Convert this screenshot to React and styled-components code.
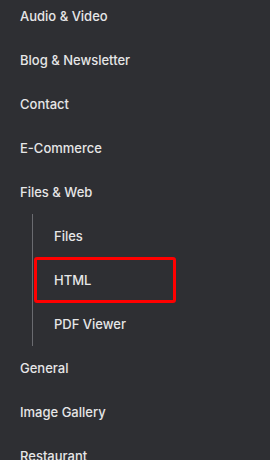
import React from "react";
import styled, { createGlobalStyle } from "styled-components";

const GlobalStyle = createGlobalStyle`
  html, body {
    margin: 0;
    padding: 0;
    background-color: #2e2f33;
  }
  body {
    width: 270px;
    height: 460px;
    overflow: hidden;
    font-family: Inter, "Noto Sans", sans-serif;
  }
`;

const Sidebar = styled.nav`
  width: 270px;
  height: 460px;
  background-color: #2e2f33;
  overflow: hidden;
`;

const Menu = styled.ul`
  list-style: none;
  margin: -6px 0 0 0;
  padding: 0;
`;

const Item = styled.li`
  display: flex;
  flex-direction: column;
`;

const Link = styled.a`
  display: flex;
  align-items: center;
  height: 44px;
  padding-left: 20px;
  color: #e6e6e7;
  font-size: 13px;
  font-weight: 500;
  text-decoration: none;
`;

const SubMenu = styled.ul`
  list-style: none;
  margin: 0 0 0 32px;
  padding: 0 0 0 2px;
  border-left: 1px solid #6a6b70;
  display: flex;
  flex-direction: column;
`;

const SubLink = styled.a`
  display: flex;
  align-items: center;
  width: 140px;
  height: 44px;
  box-sizing: border-box;
  padding-left: 19px;
  color: #e6e6e7;
  font-size: 13px;
  font-weight: 500;
  text-decoration: none;
  border-radius: 2px;
  outline: ${(p) => (p.$highlight ? "3px solid #ff0000" : "none")};
  outline-offset: -2px;
`;

const items = [
  { label: "Audio & Video" },
  { label: "Blog & Newsletter" },
  { label: "Contact" },
  { label: "E-Commerce" },
  {
    label: "Files & Web",
    children: [
      { label: "Files" },
      { label: "HTML", highlight: true },
      { label: "PDF Viewer" },
    ],
  },
  { label: "General" },
  { label: "Image Gallery" },
  { label: "Restaurant" },
];

export default function App() {
  return (
    <>
      <GlobalStyle />
      <Sidebar>
        <Menu>
          {items.map((item) => (
            <Item key={item.label}>
              <Link href="#">{item.label}</Link>
              {item.children && (
                <SubMenu>
                  {item.children.map((c) => (
                    <li key={c.label}>
                      <SubLink href="#" $highlight={c.highlight}>
                        {c.label}
                      </SubLink>
                    </li>
                  ))}
                </SubMenu>
              )}
            </Item>
          ))}
        </Menu>
      </Sidebar>
    </>
  );
}
